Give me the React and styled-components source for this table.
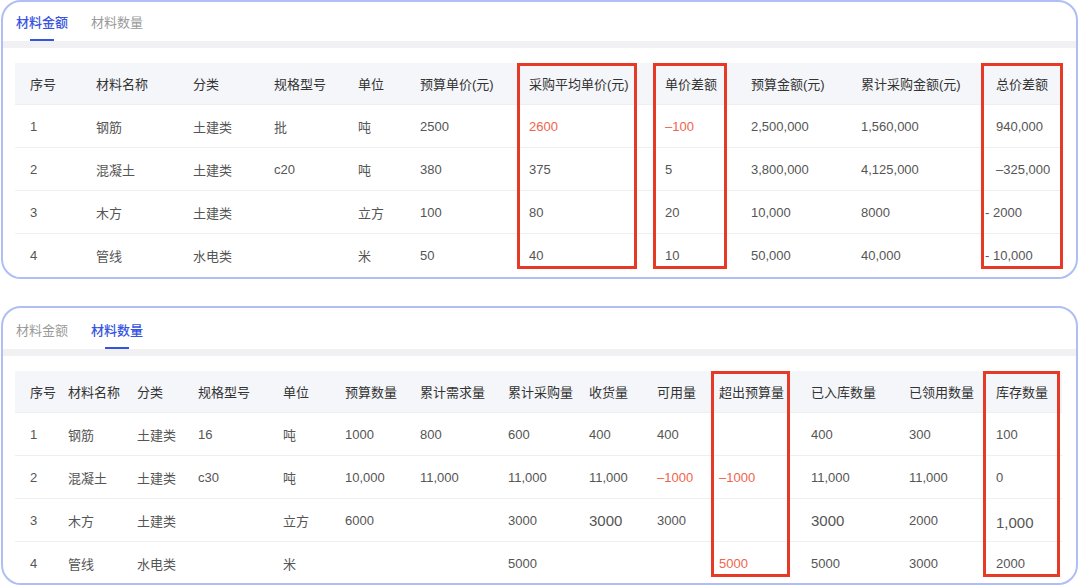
import React from 'react';
import styled, { createGlobalStyle } from 'styled-components';

const GlobalStyle = createGlobalStyle`
  html, body {
    margin: 0;
    padding: 0;
    background: #ffffff;
  }
  body {
    font-family: "Liberation Sans", "Noto Sans CJK SC", sans-serif;
    -webkit-font-smoothing: antialiased;
  }
`;

const RED = '#f0644c';

const amountCols = [66, 97, 81, 84, 62, 109, 136, 86, 110, 135, 69];
const amountHead = [
  '序号', '材料名称', '分类', '规格型号', '单位', '预算单价(元)',
  '采购平均单价(元)', '单价差额', '预算金额(元)', '累计采购金额(元)', '总价差额',
];
const amountRows = [
  ['1', '钢筋', '土建类', '批', '吨', '2500', { v: '2600', red: true }, { v: '–100', red: true }, '2,500,000', '1,560,000', '940,000'],
  ['2', '混凝土', '土建类', 'c20', '吨', '380', '375', '5', '3,800,000', '4,125,000', '–325,000'],
  ['3', '木方', '土建类', '', '立方', '100', '80', '20', '10,000', '8000', { v: '- 2000', shift: true }],
  ['4', '管线', '水电类', '', '米', '50', '40', '10', '50,000', '40,000', { v: '- 10,000', shift: true }],
];
const amountMarks = [
  { left: 502, width: 120 },
  { left: 638, width: 74 },
  { left: 966, width: 82 },
];

const qtyCols = [38, 69, 61, 85, 62, 75, 88, 81, 68, 62, 92, 98, 87, 69];
const qtyHead = [
  '序号', '材料名称', '分类', '规格型号', '单位', '预算数量', '累计需求量',
  '累计采购量', '收货量', '可用量', '超出预算量', '已入库数量', '已领用数量', '库存数量',
];
const qtyRows = [
  ['1', '钢筋', '土建类', '16', '吨', '1000', '800', '600', '400', '400', '', '400', '300', '100'],
  ['2', '混凝土', '土建类', 'c30', '吨', '10,000', '11,000', '11,000', '11,000', { v: '–1000', red: true }, { v: '–1000', red: true }, '11,000', '11,000', '0'],
  ['3', '木方', '土建类', '', '立方', '6000', '', '3000', { v: '3000', big: true }, '3000', '', { v: '3000', big: true }, '2000', { v: '1,000', big: true, low: true }],
  ['4', '管线', '水电类', '', '米', '', '', '5000', '', '', { v: '5000', red: true }, '5000', '3000', '2000'],
];
const qtyMarks = [
  { left: 696, width: 79 },
  { left: 968, width: 77 },
];

const tabs = ['材料金额', '材料数量'];

const Page = styled.div`
  display: flex;
  flex-direction: column;
  gap: 27px;
  padding: 0 2px 0 1px;
`;

const Card = styled.section`
  border: 2px solid #b0bef6;
  border-radius: 20px;
  height: 279px;
  box-sizing: border-box;
  overflow: hidden;
  background: #ffffff;
`;

const TabBar = styled.div`
  display: flex;
  gap: 23px;
  height: ${(p) => p.$h}px;
  padding: 0 13px;
  align-items: center;
  box-sizing: border-box;
  border-bottom: 7px solid #f1f1f3;
`;

const Tab = styled.div`
  position: relative;
  height: 100%;
  display: flex;
  align-items: center;
  font-size: 13px;
  color: ${(p) => (p.$active ? '#3554e0' : '#9a9a9a')};
  font-weight: ${(p) => (p.$active ? 500 : 400)};
  padding-top: ${(p) => p.$pt}px;
  box-sizing: border-box;

  &::after {
    content: '';
    display: ${(p) => (p.$active ? 'block' : 'none')};
    position: absolute;
    left: 50%;
    bottom: 0;
    width: 24px;
    margin-left: -12px;
    height: 2px;
    background: #3554e0;
  }
`;

const TableWrap = styled.div`
  position: relative;
  margin: 15px 14px 0 12px;
`;

const Row = styled.div`
  display: grid;
  grid-template-columns: ${(p) => p.$cols.map((c) => `${c}px`).join(' ')};
  padding-left: 15px;
  height: ${(p) => (p.$head ? 42 : 43)}px;
  align-items: center;
  background: ${(p) => (p.$head ? '#f5f6f9' : '#ffffff')};
  border-bottom: 1px solid ${(p) => (p.$last ? 'transparent' : '#eeeff1')};
  box-sizing: border-box;
`;

const Cell = styled.div`
  white-space: nowrap;
  font-size: ${(p) => (p.$big ? '15px' : '13px')};
  color: ${(p) => (p.$red ? RED : p.$head ? '#333333' : '#555555')};
  margin-left: ${(p) => (p.$shift ? '-11px' : '0')};
  padding-top: ${(p) => (p.$low ? '4px' : '0')};
`;

const Mark = styled.div`
  position: absolute;
  top: 0;
  height: 206px;
  border: 3px solid #e63a27;
  box-sizing: border-box;
  pointer-events: none;
`;

const DataTable = ({ cols, head, rows, marks }) => (
  <TableWrap>
    <Row $cols={cols} $head>
      {head.map((h) => (
        <Cell key={h} $head>{h}</Cell>
      ))}
    </Row>
    {rows.map((r, i) => (
      <Row key={i} $cols={cols} $last={i === rows.length - 1}>
        {r.map((c, j) => {
          const cell = typeof c === 'string' ? { v: c } : c;
          return (
            <Cell
              key={j}
              $red={cell.red}
              $big={cell.big}
              $shift={cell.shift}
              $low={cell.low}
            >
              {cell.v}
            </Cell>
          );
        })}
      </Row>
    ))}
    {marks.map((m) => (
      <Mark key={m.left} style={{ left: m.left, width: m.width }} />
    ))}
  </TableWrap>
);

const Panel = ({ active, tabH, tabPt, children }) => (
  <Card>
    <TabBar $h={tabH}>
      {tabs.map((t, i) => (
        <Tab key={t} $active={i === active} $pt={tabPt}>
          {t}
        </Tab>
      ))}
    </TabBar>
    {children}
  </Card>
);

const App = () => (
  <>
    <GlobalStyle />
    <Page>
      <Panel active={0} tabH={46} tabPt={0}>
        <DataTable cols={amountCols} head={amountHead} rows={amountRows} marks={amountMarks} />
      </Panel>
      <Panel active={1} tabH={48} tabPt={2}>
        <DataTable cols={qtyCols} head={qtyHead} rows={qtyRows} marks={qtyMarks} />
      </Panel>
    </Page>
  </>
);

export default App;
